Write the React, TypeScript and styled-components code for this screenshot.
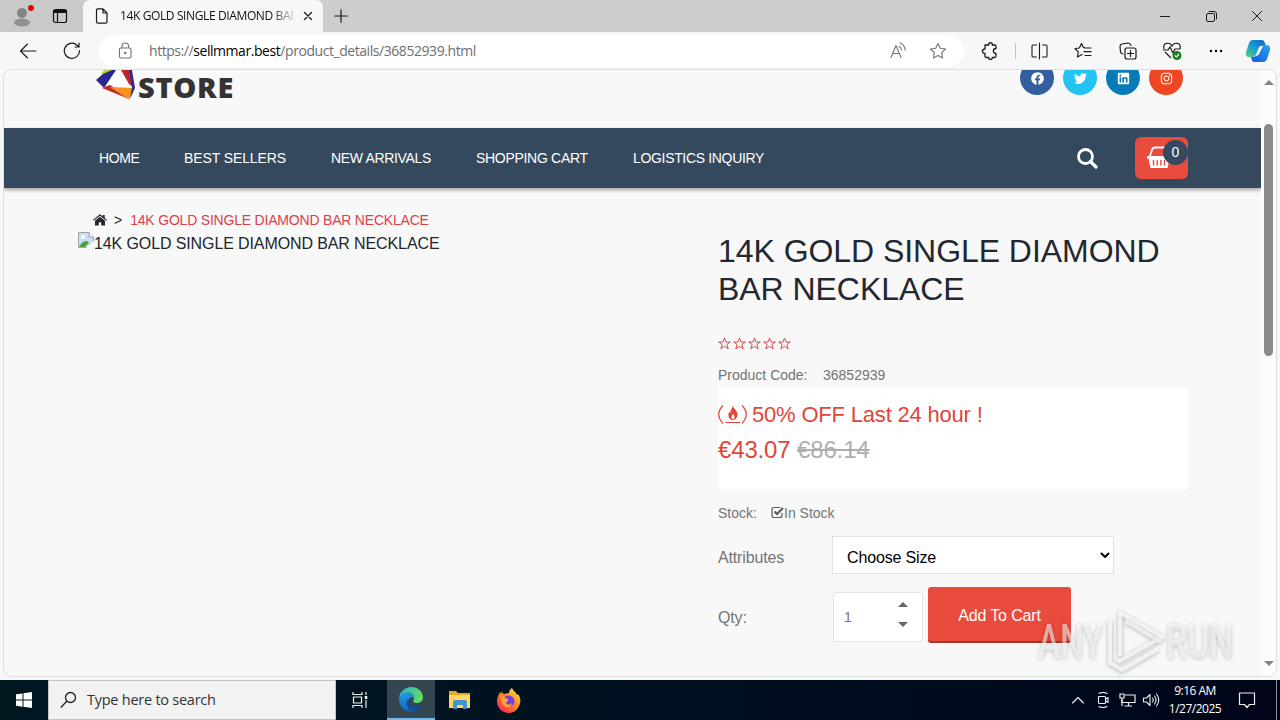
import styled, { createGlobalStyle } from 'styled-components'
import { FaFacebook, FaInstagram, FaLinkedin, FaTwitter } from 'react-icons/fa'

const GlobalStyle = createGlobalStyle`
  * { box-sizing: border-box; }
  body { margin: 0; overflow: hidden; }
  h1, p { margin: 0; font-weight: 400; }
  svg { display: block; flex: none; }
`

const ui = `'Open Sans', 'Noto Sans', sans-serif`

const Screen = styled.div`
  width: 1280px;
  height: 720px;
  display: flex;
  flex-direction: column;
  background: #f7f7f7;
  overflow: hidden;
  font-family: 'Liberation Sans', Arial, sans-serif;
`

/* browser chrome */

const TitleBar = styled.div`
  height: 32px;
  flex: none;
  display: flex;
  background: #cdcdcd;
`

const Slot = styled.div<{ w: number }>`
  width: ${(p) => p.w}px;
  height: 100%;
  flex: none;
  display: flex;
  align-items: center;
  justify-content: center;
`

const TabActions = styled.div`
  width: 83px;
  display: flex;
  padding-left: 3px;
  background: #c9c9c9;
  border-radius: 0 0 6px 0;
`

const Tab = styled.div`
  width: 240px;
  display: flex;
  align-items: center;
  padding-left: 11px;
  background: #f7f7f7;
  border-radius: 7px 7px 0 0;
`

const TabTitle = styled.div`
  width: 174px;
  margin-left: 10px;
  overflow: hidden;
  white-space: nowrap;
  font: 12px/18px ${ui};
  letter-spacing: -0.38px;
  color: #111;
  mask-image: linear-gradient(90deg, #000 150px, transparent 178px);
`

const Spacer = styled.div`
  flex: 1;
`

const Toolbar = styled.div`
  height: 38px;
  flex: none;
  display: flex;
  align-items: center;
  padding-left: 6px;
`

const AddressBar = styled.div`
  width: 865px;
  height: 32px;
  margin-left: 5px;
  display: flex;
  align-items: center;
  padding: 0 6px 0 19px;
  background: #fff;
  border-radius: 16px;
`

const Url = styled.div`
  flex: 1;
  margin-left: 16px;
  font: 14px/20px ${ui};
  letter-spacing: -0.44px;
  color: #6e6e6e;
  b {
    font-weight: 400;
    color: #000;
  }
`

const Divider = styled.div`
  width: 1px;
  height: 16px;
  margin: 0 1px;
  background: #c4c4c4;
`

/* page */

const Viewport = styled.div`
  height: 606px;
  flex: none;
  margin: 0 4px 4px;
  display: flex;
  border-radius: 8px;
  overflow: hidden;
  background: #f8f8f8;
  box-shadow: 0 0 0 1px #dedede;
`

const Page = styled.div`
  width: 1257px;
  overflow: hidden;
`

const Scrollbar = styled.div`
  width: 15px;
  background: #fcfcfc;
  display: flex;
  flex-direction: column;
  align-items: center;
  padding: 10px 0 10px;
`

const Thumb = styled.div`
  width: 9px;
  height: 232px;
  margin-top: 39px;
  border-radius: 5px;
  background: #8b8b8b;
`

const Arrow = styled.div<{ down?: boolean; color?: string }>`
  border: solid transparent;
  border-width: 0 5px 5px;
  border-bottom-color: ${(p) => p.color || '#858585'};
  transform: ${(p) => (p.down ? 'rotate(180deg)' : 'none')};
`

const Header = styled.header`
  height: 58px;
  display: flex;
  justify-content: space-between;
  padding: 0 78px 0 91px;
`

const Logo = styled.div`
  display: flex;
  font: 800 29px/33px 'Open Sans', sans-serif;
  letter-spacing: 0.7px;
  color: #333;
  svg {
    margin-right: 3px;
  }
`

const Socials = styled.div`
  display: flex;
  gap: 9px;
  margin-top: -9px;
`

const Social = styled.div<{ bg: string }>`
  width: 34px;
  height: 34px;
  display: flex;
  align-items: center;
  justify-content: center;
  border-radius: 50%;
  background: ${(p) => p.bg};
  color: #fff;
  font-size: 13px;
`

const Nav = styled.nav`
  height: 60px;
  display: flex;
  align-items: center;
  padding: 0 73px 0 95px;
  background: #34495e;
  box-shadow: 0 2px 4px rgba(0, 0, 0, 0.35);
  color: #fff;
`

const NavLink = styled.a<{ w: number; track: number }>`
  width: ${(p) => p.w}px;
  font-size: 14px;
  letter-spacing: ${(p) => p.track}px;
  white-space: nowrap;
`

const CartButton = styled.div`
  width: 53px;
  height: 42px;
  margin-left: 37px;
  padding: 9px 0 0 12px;
  position: relative;
  background: #e94b3c;
  border-radius: 6px;
`

const Badge = styled.span`
  position: absolute;
  top: 3px;
  right: 0;
  width: 25px;
  height: 25px;
  border-radius: 50%;
  background: #34495e;
  text-align: center;
  font-size: 14px;
  line-height: 25px;
`

const Breadcrumb = styled.div`
  height: 44px;
  display: flex;
  align-items: center;
  padding: 20px 0 0 89px;
  font-size: 14px;
  color: #23272b;
  a {
    color: #dc3f4a;
    letter-spacing: -0.2px;
  }
  span {
    margin: 0 8px 0 7px;
  }
`

const Columns = styled.main`
  display: flex;
  padding-left: 74px;
`

const Gallery = styled.div`
  width: 640px;
  display: flex;
  align-items: flex-start;
  font-size: 16px;
  line-height: 24px;
  letter-spacing: -0.11px;
  color: #212529;
`

const Details = styled.section`
  width: 470px;
  color: #747474;
  font-size: 14px;
`

const ProductTitle = styled.h1`
  font-size: 32px;
  line-height: 38px;
  letter-spacing: -0.05px;
  white-space: nowrap;
  color: #23272f;
`

const Stars = styled.div`
  display: flex;
  gap: 2px;
  margin-top: 29px;
`

const Meta = styled.div<{ h: number; pad?: number }>`
  height: ${(p) => p.h}px;
  padding-top: ${(p) => p.pad || 0}px;
  display: flex;
  align-items: center;
`

const PriceBox = styled.div`
  height: 102px;
  padding-top: 9px;
  background: #fff;
  color: #e04639;
`

const Offer = styled.p`
  display: flex;
  align-items: center;
  gap: 4px;
  height: 36px;
  padding-top: 1px;
  font-size: 22px;
  letter-spacing: -0.19px;
  white-space: nowrap;
`

const Price = styled.p`
  font-size: 24px;
  line-height: 36px;
  letter-spacing: -0.15px;
  del {
    color: #aeaeae;
  }
`

const Label = styled.span<{ w: number }>`
  width: ${(p) => p.w}px;
  white-space: nowrap;
`

const FormRow = styled.div<{ gap?: number }>`
  display: flex;
  align-items: center;
  padding-top: ${(p) => p.gap || 0}px;
  font-size: 16px;
  letter-spacing: -0.15px;
  ${Label} {
    padding-top: 5px;
  }
`

const Select = styled.div`
  width: 282px;
  height: 38px;
  display: flex;
  align-items: center;
  justify-content: space-between;
  padding: 5px 3px 0 14px;
  border: 1px solid #e2e2e2;
  background: #fff;
  color: #000;
  svg {
    margin-top: -4px;
  }
`

const Quantity = styled.div`
  width: 90px;
  height: 50px;
  margin: 5px 0 1px;
  display: flex;
  justify-content: space-between;
  align-items: center;
  padding: 0 14px 0 10px;
  border: 1px solid #e4e4e4;
  border-radius: 3px;
  background: #fff;
  font-size: 14px;
`

const Steps = styled.div`
  height: 50px;
  display: flex;
  flex-direction: column;
  gap: 15px;
  padding-top: 10px;
`

const AddButton = styled.div`
  width: 143px;
  height: 56px;
  margin-left: 5px;
  background: #e94b3c;
  border-bottom: 2px solid #a9352b;
  border-radius: 3px;
  color: #fff;
  line-height: 57px;
  text-align: center;
`

const Watermark = styled.div`
  position: absolute;
  left: 1034px;
  top: 604px;
  svg {
    filter: drop-shadow(0 1px 2px rgba(0, 0, 0, 0.4));
  }
`

/* taskbar */

const Taskbar = styled.div`
  height: 40px;
  flex: none;
  display: flex;
  background: linear-gradient(90deg, #001720, #001021 55%, #00051a);
  color: #fff;
`

const SearchBox = styled.div`
  width: 288px;
  display: flex;
  align-items: center;
  padding-left: 11px;
  background: #f2f2f2;
  border: 1px solid #c4c4c4;
  font: 14.5px/20px ${ui};
  letter-spacing: -0.25px;
  color: #333;
  svg {
    margin-right: 9px;
  }
`

const ActiveTask = styled.div`
  width: 48px;
  display: flex;
  align-items: center;
  justify-content: center;
  background: #34464f;
  border-bottom: 2px solid #76b9ed;
`

const Clock = styled.div`
  width: 64px;
  padding-top: 2px;
  font: 12px/18px ${ui};
  letter-spacing: -0.5px;
  text-align: center;
`

const ShowDesktop = styled.div`
  width: 1px;
  margin-right: 3px;
  background: #8a8f98;
`

const links = [
  { label: 'HOME', w: 85, track: -0.4 },
  { label: 'BEST SELLERS', w: 147, track: -0.1 },
  { label: 'NEW ARRIVALS', w: 145, track: -0.33 },
  { label: 'SHOPPING CART', w: 157, track: -0.3 },
  { label: 'LOGISTICS INQUIRY', w: 140, track: -0.33 },
]

const name = '14K GOLD SINGLE DIAMOND BAR NECKLACE'

const Icon = ({ size = 18, d, color = '#1a1a1a', width = 1.1 }: { size?: number; d: string; color?: string; width?: number }) => (
  <svg width={size} height={size} viewBox={`0 0 ${size} ${size}`} fill="none" stroke={color} strokeWidth={width} strokeLinecap="round" strokeLinejoin="round">
    <path d={d} />
  </svg>
)

const CubeLogo = () => (
  <svg width="40" height="34" viewBox="95 70 40 34">
    <path d="M114 70H124L132 88L108 87Z" fill="#fff" />
    <path d="M101 74L104 70H112L104 75Z" fill="#b9d532" />
    <path d="M96 80L103 74L112 70H116L104 88Z" fill="#2b2790" />
    <path d="M96 80L104 88L110 85L107 90Z" fill="#e9582c" />
    <path d="M102 88L110 85L120 91L129 99Z" fill="#c92b27" />
    <path d="M110 87L134 88L129 99.500Z" fill="#f7931e" />
    <path d="M121 70H130L134 88L129 84Z" fill="#bd2630" />
    <path d="M129 70H132L135 88L130 99L132 87Z" fill="#342b86" />
  </svg>
)

const Copilot = () => (
  <svg width="26" height="24" viewBox="0 0 26 24">
    <defs>
      <linearGradient id="cpa" x1="0" y1="1" x2="1" y2="0">
        <stop offset="0" stopColor="#58d273" />
        <stop offset=".5" stopColor="#159bd7" />
        <stop offset="1" stopColor="#0b67cb" />
      </linearGradient>
      <linearGradient id="cpb" x1="1" y1="0" x2="0" y2="1">
        <stop offset="0" stopColor="#2aa5f5" />
        <stop offset="1" stopColor="#1557d6" />
      </linearGradient>
    </defs>
    <path d="M8 1H17Q19 1 20 4L21 7H16Q14 7 13 10L11 16Q10 18 7 18H4Q0 18 1 13L4 4Q5 1 8 1Z" fill="url(#cpa)" />
    <path d="M18 23H9Q7 23 6 18H9Q11 18 12 15L14 9Q15 6 19 6H21Q26 6 25 11L22 20Q21 23 18 23Z" fill="url(#cpb)" />
    <path d="M15 7H18L14 15Q13 17 10 17Q12 15 13 12Z" fill="#fff" />
  </svg>
)

const Edge = () => (
  <svg width="24" height="25" viewBox="0 0 24 25">
    <defs>
      <linearGradient id="ea" x1="0" y1="0" x2="1" y2=".3">
        <stop offset="0" stopColor="#2aa8e8" />
        <stop offset="1" stopColor="#5fdc62" />
      </linearGradient>
      <linearGradient id="eb" x1="0" y1="0" x2="0" y2="1">
        <stop offset="0" stopColor="#1e9ae0" />
        <stop offset="1" stopColor="#1264bc" />
      </linearGradient>
    </defs>
    <path d="M0 12C0 5 6 0 12 0C20 0 24 6 24 10C24 14 21 16 18 16C15 16 14 15 14 14C14 13 15 13 15 11C15 7 11 5 7 6C3 7 0 10 0 12Z" fill="url(#ea)" />
    <path d="M0 12C1 8 5 6 8 6C12 6 15 8 15 11C13 9 9 11 9 15C9 20 16 22 22 18C19 23 16 24.500 12 24.500C5 24.500 0 19 0 12Z" fill="url(#eb)" />
    <path d="M9 12C6 16 8 23 14 24C18 24 21 21 22 18C16 21 9 19 9 12Z" fill="#124c91" />
  </svg>
)

const Firefox = () => (
  <svg width="24" height="25" viewBox="0 0 24 25">
    <defs>
      <linearGradient id="ff" x1="1" y1="0" x2=".2" y2="1">
        <stop offset="0" stopColor="#fff04a" />
        <stop offset=".45" stopColor="#ff9527" />
        <stop offset="1" stopColor="#f5255c" />
      </linearGradient>
    </defs>
    <path d="M5 3C5 5 6 6 8 6C10 5 12 5 12 5C12 3 13 1 15 0C16 3 19 4 20 7L21 6C23 9 24 12 23 15C22 21 17 25 12 25C5 25 0 20 0 13C0 9 2 6 3 4L4 6Z" fill="url(#ff)" />
    <path d="M7 10C8 7 15 6 17 11C19 16 15 19 12 18C8 18 7 15 8 14L11 13C12 12 9 12 7 10Z" fill="#7540d5" />
    <path d="M3 8C6 7 8 11 11 11C12 13 9 13 9 15C10 17 13 17 15 15C15 19 9 21 6 17C4 14 5 11 3 8Z" fill="#ffa52c" />
  </svg>
)

const Star = () => (
  <svg width="13" height="13" viewBox="0 0 13 13" fill="none" stroke="#cc3f3b" strokeWidth=".9">
    <path d="M6.500 1L8 5H12.300L8.900 7.500L10.200 11.800L6.500 9.300L2.800 11.800L4.100 7.500L.7 5H5Z" />
  </svg>
)

const socials = [
  { bg: '#335f9f', icon: <FaFacebook /> },
  { bg: '#24c4f2', icon: <FaTwitter /> },
  { bg: '#087bb7', icon: <FaLinkedin /> },
  { bg: '#ef4723', icon: <FaInstagram /> },
]

const BrowserChrome = () => (
  <>
    <TitleBar>
      <TabActions>
        <Slot w={38}>
          <svg width="24" height="24" viewBox="0 0 24 24">
            <circle cx="12" cy="9" r="5" fill="#858585" />
            <ellipse cx="12" cy="18.500" rx="8" ry="4" fill="#929292" />
            <circle cx="21" cy="4" r="3" fill="#e3000f" />
          </svg>
        </Slot>
        <Slot w={38}>
          <svg width="16" height="16" viewBox="0 0 16 16" fill="none" stroke="#111" strokeWidth="1.2">
            <rect x="1.500" y="1.500" width="13" height="13" rx="2" />
            <path d="M2 3.500H14" strokeWidth="3" />
            <path d="M5.500 4V14" />
          </svg>
        </Slot>
      </TabActions>
      <Tab>
        <Icon size={16} d="M3.500 .8H9L13 5V13.700Q13 15.200 11.500 15.200H4Q2.500 15.200 2.500 13.700V2Q2.500 .8 3.500 .8ZM9 1V5H13" width={1.2} />
        <TabTitle>{name}</TabTitle>
        <Slot w={30}>
          <Icon size={10} d="M1.500 1.500L8.500 8.500M8.500 1.500L1.500 8.500" width={1.3} />
        </Slot>
      </Tab>
      <Slot w={35}>
        <Icon size={14} d="M7 .8V13.200M.8 7H13.200" width={1.2} />
      </Slot>
      <Spacer />
      <Slot w={46}>
        <Icon size={10} d="M0 5.500H10" width={1} />
      </Slot>
      <Slot w={46}>
        <Icon size={11} d="M2 2.500H7Q8.500 2.500 8.500 4V9Q8.500 10.500 7 10.500H2Q.5 10.500 .5 9V4Q.5 2.500 2 2.500ZM3 .5H8Q10.500 .5 10.500 3V8" width={1} />
      </Slot>
      <Slot w={46}>
        <Icon size={10} d="M.5 .5L9.500 9.500M9.500 .5L.5 9.500" width={1} />
      </Slot>
    </TitleBar>
    <Toolbar>
      <Slot w={44}>
        <Icon d="M17 9H1.500M8.500 2L1.500 9L8.500 16" />
      </Slot>
      <Slot w={44}>
        <Icon d="M16.500 8.500A7.600 7.600 0 1 1 14 3.200L16 5M16 1V5H12" width={1.2} />
      </Slot>
      <AddressBar>
        <svg width="15" height="18" viewBox="0 0 15 18" fill="none" stroke="#707070" strokeWidth="1.1">
          <rect x="1.500" y="6" width="11.500" height="10" rx="1.500" />
          <path d="M4 6V4Q4 1 7.250 1Q10.500 1 10.500 4V6" />
          <circle cx="7.250" cy="11" r=".7" fill="#707070" />
        </svg>
        <Url>
          https://<b>sellmmar.best</b>/product_details/36852939.html
        </Url>
        <Slot w={40}>
          <Icon d="M2 15.500L7 3.500L12 15.500M3.800 11.500H10.200M10 4.500Q12.500 5.500 12.500 8M11 1Q16 3 16 8" color="#747474" />
        </Slot>
        <Slot w={40}>
          <Icon d="M9 1.500L11.300 6.300L16.500 7L12.700 10.700L13.600 16L9 13.500L4.400 16L5.300 10.700L1.500 7L6.700 6.300Z" color="#747474" />
        </Slot>
      </AddressBar>
      <Slot w={50}>
        <svg width="18" height="18" viewBox="0 0 18 18" fill="none" stroke="#1a1a1a" strokeWidth="1.300" strokeLinejoin="round">
          <path d="M5.500 3H8.800C8 0 13 0 12.200 3H14.500Q16 3 16 4.500V6.500C12.500 6.500 12.500 11.500 16 11.500V14Q16 15.500 14.500 15.500H12.300C12.500 18 8.500 18 8.700 15.500H6.500Q5 15.500 5 14V11.500C1.500 11.500 1.500 7 5 7V3Z" />
        </svg>
      </Slot>
      <Divider />
      <Slot w={44}>
        <Icon d="M9.500 1V17M6.500 3H3Q2 3 2 4V14Q2 15 3 15H6.500M12.500 3H16Q17 3 17 4V14Q17 15 16 15H12.500" width={1.1} />
      </Slot>
      <Slot w={44}>
        <Icon d="M12 6L9.500 5.700L7.500 1.500L5.300 6L1 6.500L4.300 9.800L3.500 15L8 12.500M12 6H17M10 9.700H17M11 13.500H17" width={1.2} />
      </Slot>
      <Slot w={45}>
        <Icon d="M7 6H15Q17 6 17 8V15Q17 17 15 17H8Q6 17 6 15V8Q6 6 8 6M11.500 8.500V14.500M8.500 11.500H14.500M4 12Q2 12 1.500 10L1 4.500Q1 2.500 3 2L9 1Q11 1 12 3.500" width={1.2} />
      </Slot>
      <Slot w={44}>
        <svg width="20" height="20" viewBox="0 0 20 20" fill="none" stroke="#1a1a1a" strokeWidth="1.200">
          <path d="M2 8C0 1 8 1 10 5C12 1 20 1 18 8M1 9H6L8 6L11 12L13 8H18M3 11L9 17" />
          <circle cx="15" cy="14.500" r="4.500" fill="#16801a" stroke="none" />
          <path d="M12.800 14.500L14.500 16L17 13" stroke="#fff" />
        </svg>
      </Slot>
      <Slot w={44}>
        <svg width="16" height="4" viewBox="0 0 16 4">
          <circle cx="3" cy="2" r="1.200" />
          <circle cx="8" cy="2" r="1.200" />
          <circle cx="13" cy="2" r="1.200" />
        </svg>
      </Slot>
      <Slot w={40}>
        <Copilot />
      </Slot>
    </Toolbar>
  </>
)

const Product = () => (
  <Columns>
    <Gallery>
      <svg width="16" height="16" viewBox="0 0 16 16">
        <path d="M.5 .5H11L15.500 5V15.500H.5Z" fill="#c9dcf8" stroke="#a3a3a3" />
        <path d="M11 .5V5H15.500" fill="#fff" stroke="#a3a3a3" />
        <circle cx="5" cy="5" r="2" fill="#fff" />
        <path d="M1 15Q4 9 8 9Q10 9 11 11L7 15Z" fill="#4ea23b" />
        <path d="M8 16L16 9V16Z" fill="#f8f8f8" />
      </svg>
      {name}
    </Gallery>
    <Details>
      <ProductTitle>
        14K GOLD SINGLE DIAMOND
        <br />
        BAR NECKLACE
      </ProductTitle>
      <Stars>
        {[1, 2, 3, 4, 5].map((n) => (
          <Star key={n} />
        ))}
      </Stars>
      <Meta h={37} pad={13}>
        <Label w={105}>Product Code:</Label>
        <span>36852939</span>
      </Meta>
      <PriceBox>
        <Offer>
          <svg width="30" height="22" viewBox="0 0 30 22" fill="none" stroke="#e04639" strokeWidth="1.200">
            <path d="M5 1.500Q-3.500 10 5 19.500M24 1.500Q32.500 10 24 19.500M7.500 18.500H22" />
            <path d="M14.500 1C15.500 5 20 7 19.500 11C19 15 16 16 15 16C11 16 9.500 12 11 8L12.500 9C12 5 15 5 14.500 1Z" fill="#e04639" stroke="none" />
            <path d="M15 10Q12 13 15 15.500Q18 13 15 10Z" fill="#fff" stroke="none" />
          </svg>
          50% OFF Last 24 hour !
        </Offer>
        <Price>
          €43.07 <del>€86.14</del>
        </Price>
      </PriceBox>
      <Meta h={47}>
        <Label w={53}>Stock:</Label>
        <svg width="13" height="13" viewBox="0 0 13 13" fill="none" stroke="#5d5d5d">
          <path d="M11 7V9.500Q11 11.500 9 11.500H3Q1 11.500 1 9.500V3.500Q1 1.500 3 1.500H9.500" strokeWidth="1.200" />
          <path d="M3.500 5.500L6 8L12 2" strokeWidth="2.200" />
        </svg>
        <span>In Stock</span>
      </Meta>
      <FormRow>
        <Label w={114}>Attributes</Label>
        <Select>
          Choose Size
          <Icon size={10} d="M1.500 2.500L5 6L8.500 2.500" color="#000" width={2} />
        </Select>
      </FormRow>
      <FormRow gap={13}>
        <Label w={115}>Qty:</Label>
        <Quantity>
          1
          <Steps>
            <Arrow color="#666" />
            <Arrow color="#666" down />
          </Steps>
        </Quantity>
        <AddButton>Add To Cart</AddButton>
      </FormRow>
    </Details>
  </Columns>
)

const App = () => {
  return (
    <Screen>
      <GlobalStyle />
      <BrowserChrome />
      <Viewport>
        <Page>
          <Header>
            <Logo>
              <CubeLogo />
              STORE
            </Logo>
            <Socials>
              {socials.map((s) => (
                <Social key={s.bg} bg={s.bg}>
                  {s.icon}
                </Social>
              ))}
            </Socials>
          </Header>
          <Nav>
            {links.map((l) => (
              <NavLink key={l.label} w={l.w} track={l.track}>
                {l.label}
              </NavLink>
            ))}
            <Spacer />
            <svg width="21" height="22" viewBox="0 0 21 22" fill="none" stroke="#fff">
              <circle cx="8.500" cy="9.500" r="7" strokeWidth="2.800" />
              <path d="M13.500 14.500L19 20" strokeWidth="3.200" strokeLinecap="round" />
            </svg>
            <CartButton>
              <svg width="24" height="23" viewBox="0 0 24 23" fill="#fff">
                <path d="M3 10L5 4Q6 1.500 8 1.500H18L21 10" fill="none" stroke="#fff" strokeWidth="1.800" />
                <path d="M0 10H24V12.500H22.500L20.500 22H3.500L1.500 12.500H0Z" />
                <path d="M6.500 14V19.500M10.200 14V19.500M13.900 14V19.500M17.500 14V19.500" stroke="#e94b3c" strokeWidth="1.400" />
              </svg>
              <Badge>0</Badge>
            </CartButton>
          </Nav>
          <Breadcrumb>
            <svg width="14" height="12" viewBox="0 0 14 12" fill="#23272b">
              <path d="M0 6L6.500 .6Q7 .2 7.500 .6L9.800 2.500V1H11.700V4L14 6L13.300 6.800L7 1.800L.7 6.800Z" />
              <path d="M2 6.800L7 2.800L12 6.800V11.500H8.200V8.200H5.800V11.500H2Z" />
            </svg>
            <span>&gt;</span>
            <a>{name}</a>
          </Breadcrumb>
          <Product />
        </Page>
        <Scrollbar>
          <Arrow />
          <Thumb />
          <Spacer />
          <Arrow down />
        </Scrollbar>
      </Viewport>
      <Taskbar>
        <Slot w={48}>
          <svg width="16" height="16" viewBox="0 0 16 16" fill="#fff">
            <path d="M0 2.300L6.500 1.400V7.600H0ZM7.500 1.200L16 0V7.600H7.500ZM0 8.500H6.500V14.700L0 13.800ZM7.500 8.500H16V16L7.500 14.800Z" />
          </svg>
        </Slot>
        <SearchBox>
          <svg width="18" height="18" viewBox="0 0 18 18" fill="none" stroke="#222" strokeWidth="1.300">
            <circle cx="10.500" cy="6.500" r="5" />
            <path d="M7 10L.8 16.500" />
          </svg>
          Type here to search
        </SearchBox>
        <Slot w={47}>
          <svg width="18" height="18" viewBox="0 0 18 18" fill="none" stroke="#eee" strokeWidth="1.200">
            <path d="M2 1V3.500H11V1M2 17V14.500H11V17M2.500 6H10.500V12H2.500ZM15 1V4M15 9V17" />
            <rect x="13.700" y="5" width="2.600" height="3" fill="#eee" stroke="none" />
          </svg>
        </Slot>
        <Slot w={4} />
        <ActiveTask>
          <Edge />
        </ActiveTask>
        <Slot w={49}>
          <svg width="22" height="20" viewBox="0 0 22 20">
            <path d="M0 1H7L9 3H21V18H0Z" fill="#e8a723" />
            <path d="M0 5H21V18H0Z" fill="#ffd766" />
            <path d="M4 12Q4 10 6 10H16Q18 10 18 12V19H14V15H8V19H4Z" fill="#4094d0" />
          </svg>
        </Slot>
        <Slot w={49}>
          <Firefox />
        </Slot>
        <Spacer />
        <Slot w={24}>
          <Icon size={14} d="M1.500 10L7 4.500L12.500 10" color="#eee" />
        </Slot>
        <Slot w={25}>
          <Icon size={16} d="M3.500 4.500H9.500Q10.500 4.500 10.500 5.500V10.500Q10.500 11.500 9.500 11.500H4.500Q3.500 11.500 3.500 10.500ZM10.500 7.500L13 5.500V10.500L10.500 9M4 1.500Q8 -.5 12 1.500M4 14.500Q8 16.500 12 14.500" color="#eee" />
        </Slot>
        <Slot w={24}>
          <svg width="17" height="16" viewBox="0 0 17 16" fill="none" stroke="#eee" strokeWidth="1.200">
            <path d="M6 3H16V10.500H3V7M9.500 10.500V14M5.500 14H13" />
            <path d="M1 2H5V6H1ZM3 6V14" />
          </svg>
        </Slot>
        <Slot w={24}>
          <Icon size={18} d="M1.500 7H4.500L8 3.500V14.500L4.500 11H1.500ZM10.500 7Q12 9 10.500 11M12.500 5Q15.500 9 12.500 13M14.500 3Q19 9 14.500 15" color="#eee" />
        </Slot>
        <Clock>
          9:16 AM
          <br />
          1/27/2025
        </Clock>
        <Slot w={40}>
          <Icon size={18} d="M1.500 2H16.500V13.500H11.500L9 16.500L6.500 13.500H1.500Z" color="#eee" width={1.2} />
        </Slot>
        <Slot w={9} />
        <ShowDesktop />
      </Taskbar>
      <Watermark>
        <svg width="210" height="74" viewBox="0 0 210 74">
          <g fill="#fff" fillOpacity=".55" fontFamily="Roboto, sans-serif" fontWeight="500" fontSize="48">
            <text x="4" y="54" textLength="65" lengthAdjust="spacingAndGlyphs">ANY</text>
            <text x="132" y="54" textLength="67" lengthAdjust="spacingAndGlyphs">RUN</text>
          </g>
          <g fill="none" stroke="#fff" strokeOpacity=".7" strokeWidth="4" strokeLinejoin="round">
            <path d="M86 52V9L128 33L84 58M76 16V59L88 66L124 45M92 17L127 38" />
          </g>
        </svg>
      </Watermark>
    </Screen>
  )
}

export default App
